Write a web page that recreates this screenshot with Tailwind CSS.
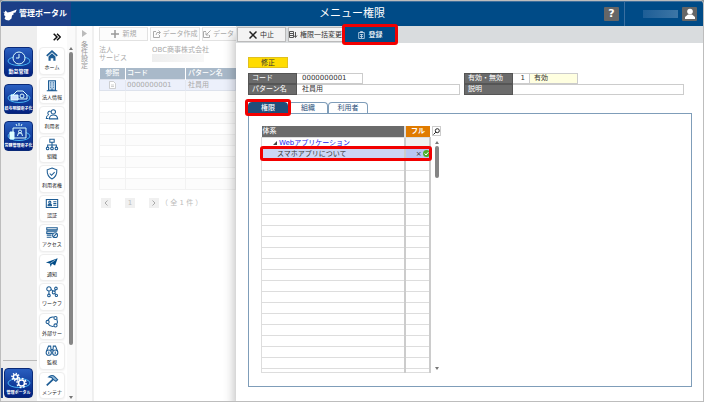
<!DOCTYPE html>
<html lang="ja">
<head>
  <meta charset="UTF-8">
  <meta name="viewport" content="width=device-width, initial-scale=1.0">
  <title>メニュー権限 - 管理ポータル</title>
  <script src="https://cdn.jsdelivr.net/npm/@tailwindcss/browser@4"></script>
</head>
<body class="bg-[#8a9299] font-['DejaVu_Sans','Noto_Sans_CJK_JP',sans-serif] text-[7px] leading-[10px] text-[#333]">
<div class="flex h-screen min-h-[402px] flex-col overflow-hidden rounded-t border border-[#bdbdbd] bg-white">

  <!-- Header -->
  <header class="flex h-[25px] shrink-0 items-center border-t border-[#3f6f9c] bg-[#004b87] text-white">
    <a href="#" class="flex h-full w-[70px] items-center gap-[2px] bg-[#1c3f87] pl-[2px] text-[8px] font-bold">
      <svg class="h-[13px] w-[14px]" viewBox="0 0 14 13" fill="currentColor"><path d="M0 3.500l1.500 1 1-2 2 2L7 4l6.800-2.500-1.300 3-2.500.5 1 1-2 1.500-.5 3L6 12.500l-3-.500-1.500-1.500 1-2L1 7l.5-1.500z"/></svg>
      管理ポータル
    </a>
    <h1 class="flex-1 pl-[29px] text-center text-[11px] leading-4">メニュー権限</h1>
    <button class="mr-[5px] flex h-[14px] w-[15px] items-center justify-center rounded-[1px] bg-[#666] text-[11px] font-bold">?</button>
    <div class="flex h-full w-[79px] items-center justify-end gap-1 border-l border-[#3a6fa0] pr-[6px]">
      <span class="h-2 w-[35px] bg-gradient-to-r from-[#1d5e96] to-[#3d76a6]"></span>
      <button class="flex h-[14px] w-[15px] items-center justify-center rounded-[1px] bg-[#666]" aria-label="ユーザー">
        <svg class="h-3 w-3" viewBox="0 0 12 12" fill="#fff"><circle cx="6" cy="3.500" r="2.800"/><path d="M1 11V9l3-2.500h4L11 9v2z"/></svg>
      </button>
    </div>
  </header>

  <div class="flex min-h-0 flex-1">
    <!-- Service switcher -->
    <nav class="flex w-9 shrink-0 flex-col gap-[7px] bg-[#eee] pt-[21px] pb-[3px] text-[4px] leading-[5px] font-bold text-white">
      <a href="#" class="ml-[3px] flex h-[30px] w-[29px] flex-col items-center justify-end rounded border border-[#0a2a78] bg-gradient-to-b from-[#2a5fc0] to-[#04207f] pb-[2px] whitespace-nowrap">
        <svg class="h-5 w-6" viewBox="0 0 24 20" fill="none" stroke="#dff" stroke-width="1"><ellipse cx="12" cy="12" rx="11" ry="4.500" stroke="#4ab4f4"/><circle cx="12" cy="9" r="6" fill="#1c48a8"/><path d="M12 5v4H9"/></svg>
        <span class="text-[5px]">勤怠管理</span>
      </a>
      <a href="#" class="ml-[3px] flex h-[30px] w-[29px] flex-col items-center justify-end rounded border border-[#0a2a78] bg-gradient-to-b from-[#2a5fc0] to-[#04207f] pb-[2px] whitespace-nowrap">
        <svg class="h-5 w-6" viewBox="0 0 24 20" fill="none" stroke="#dff" stroke-width="1"><ellipse cx="12" cy="12" rx="11" ry="4.500" stroke="#4ab4f4"/><path d="M6 9l4-4h6l4 4v4H6z" fill="#1c48a8"/><path d="M4 9h7v5H4z" fill="#cdf"/><circle cx="15" cy="10" r="2"/></svg>
        給与明細電子化
      </a>
      <a href="#" class="ml-[3px] flex h-[30px] w-[29px] flex-col items-center justify-end rounded border border-[#0a2a78] bg-gradient-to-b from-[#2a5fc0] to-[#04207f] pb-[2px] whitespace-nowrap">
        <svg class="h-5 w-6" viewBox="0 0 24 20" fill="none" stroke="#dff" stroke-width="1"><ellipse cx="12" cy="13" rx="11" ry="4.500" stroke="#4ab4f4"/><path d="M6 5h13v10H6z" fill="#1c48a8"/><path d="M3 9h4v7H3z" fill="#dff"/><circle cx="13" cy="8.500" r="1.500"/><path d="M10.500 13l1-3h3l1 3M9 1l1 2M12 0v3M15 1l-1 2"/></svg>
        労務管理電子化
      </a>
      <div class="mt-auto ml-[2px] border-t border-[#bbb]"></div>
      <a href="#" class="flex h-[30px] border-l-2 border-[#1c3f87] pl-[1px]">
        <span class="flex w-[29px] flex-col items-center justify-end rounded border border-[#0a2a78] bg-gradient-to-b from-[#2a5fc0] to-[#04207f] pb-[2px] whitespace-nowrap">
          <svg class="h-5 w-6" viewBox="0 0 24 20" fill="none" stroke="#fff" stroke-width="1.600"><ellipse cx="12" cy="13" rx="11" ry="4.500" stroke="#4ab4f4" stroke-width="1"/><circle cx="8.500" cy="7" r="2.200"/><circle cx="8.500" cy="7" r="3.500" stroke-dasharray="1.300 1.400"/><circle cx="14.500" cy="13" r="3"/><circle cx="14.500" cy="13" r="4.500" stroke-dasharray="1.700 1.800"/></svg>
          管理ポータル
        </span>
      </a>
    </nav>

    <!-- Menu -->
    <nav class="flex w-[30px] shrink-0 flex-col bg-white pb-[2px] pl-[2px]">
      <button class="flex h-[21px] shrink-0 items-center justify-end pr-[6px]" aria-label="展開">
        <svg class="h-2 w-2" viewBox="0 0 8 8" fill="none" stroke="#111" stroke-width="1.500"><path d="M.7.7L4 4 .7 7.300M4 .7L7.300 4 4 7.300"/></svg>
      </button>
      <ul id="menu" class="flex flex-1 flex-col gap-[2px] pr-[2px] text-[5px] leading-[7px] text-[#222]"></ul>
    </nav>
    <div class="flex w-[8px] shrink-0 flex-col items-center bg-[#fafafa] pt-[21px] pb-[2px]">
      <svg class="h-[3px] w-1" viewBox="0 0 4 3" fill="#777"><path d="M2 0l2 3H0z"/></svg>
      <span class="mt-[2px] min-h-[92px] w-1 basis-[293px] rounded-full bg-[#858585]"></span>
      <svg class="mt-auto h-[3px] w-1" viewBox="0 0 4 3" fill="#777"><path d="M2 3l2-3H0z"/></svg>
    </div>

    <!-- Search conditions, folded -->
    <aside class="flex w-[19px] shrink-0 flex-col items-center border-x-2 border-[#f0f0f0] bg-[#fcfcfc] pt-1 text-[#999]">
      <svg class="h-[7px] w-[5px]" viewBox="0 0 5 7" fill="#bbb"><path d="M0 0l5 3.500L0 7z"/></svg>
      <span class="mt-[5px] w-[7px] leading-[7px] break-all">条件設定</span>
    </aside>

    <!-- Pattern list -->
    <main class="w-1/5 min-w-[142px] shrink-0 overflow-hidden bg-white pl-[5px] whitespace-nowrap text-[#aaa]">
      <div class="flex gap-[2px] pt-[1px]">
        <button class="flex h-[14px] w-[49px] shrink-0 items-center justify-center gap-1 border border-[#e2e2e2] bg-[#fcfcfc]">
          <svg class="h-2 w-2" viewBox="0 0 8 8" stroke="#999" stroke-width="1.500"><path d="M4 0v8M0 4h8"/></svg>新規
        </button>
        <button class="flex h-[14px] w-[50px] shrink-0 items-center justify-center gap-[2px] border border-[#e2e2e2] bg-[#fcfcfc]">
          <svg class="h-2 w-2" viewBox="0 0 8 8" fill="none" stroke="#aaa"><path d="M3 1.500H.5v6h6V5M3 5l1-2.500h3M5.500.5l2 2-2 2"/></svg>データ作成
        </button>
        <button class="flex h-[14px] w-[50px] shrink-0 items-center gap-[2px] border border-[#e2e2e2] bg-[#fcfcfc]">
          <svg class="h-2 w-2" viewBox="0 0 8 8" fill="none" stroke="#aaa"><path d="M3 1.500H.5v6h6V5M7.500.5L3 5M3 2.500V5h2.500"/></svg>データ
        </button>
      </div>
      <dl class="mt-[5px] grid grid-cols-[53px_1fr] leading-[8px]">
        <dt>法人</dt><dd>OBC商事株式会社</dd>
        <dt>サービス</dt><dd><span class="block h-2 w-[52px] bg-gradient-to-r from-[#eee] to-[#f8f8f8]"></span></dd>
      </dl>
      <table class="mt-[6px] w-full table-fixed border-collapse">
        <thead>
          <tr class="h-[11px] bg-[#a9b9c9] text-left text-white">
            <th class="w-[26px] border-r border-white p-0 text-center font-medium">参照</th>
            <th class="w-[60px] border-r border-white p-0 pl-[1px] font-medium">コード</th>
            <th class="p-0 pl-[2px] font-medium">パターン名</th>
          </tr>
        </thead>
        <tbody id="patterns">
          <tr class="h-[11px] border border-[#dde2ec] bg-[#ecf0fb]">
            <td class="p-0"><svg class="mx-auto h-2 w-[7px]" viewBox="0 0 7 8" fill="#fff" stroke="#bbb" stroke-width=".7"><path d="M.5.5h4l2 2v5h-6zM2 4h3M2 5.500h3"/></svg></td>
            <td class="border-x border-[#e3e7f0] p-0 pl-[1px]">0000000001</td>
            <td class="p-0 pl-[2px]">社員用</td>
          </tr>
        </tbody>
      </table>
      <div class="mt-[8px] flex items-center pl-[2px] text-[#bbb]">
        <button class="flex h-[10px] w-[10px] items-center justify-center bg-[#f0f0f0]" aria-label="前へ"><svg class="h-[6px] w-1" viewBox="0 0 4 6" fill="none" stroke="#aaa"><path d="M3.500.5L1 3l2.500 2.500"/></svg></button>
        <button class="ml-[14px] h-[10px] w-[10px] bg-[#f0f0f0]">1</button>
        <button class="ml-[14px] flex h-[10px] w-[10px] items-center justify-center bg-[#f0f0f0]" aria-label="次へ"><svg class="h-[6px] w-1" viewBox="0 0 4 6" fill="none" stroke="#aaa"><path d="M.5.5L3 3 .5 5.500"/></svg></button>
        <span class="ml-[2px]">（ 全 1 件 ）</span>
      </div>
    </main>

    <!-- Edit panel -->
    <section class="relative flex min-w-0 flex-1 flex-col bg-white shadow-[-2px_8px_10px_rgba(0,0,0,0.25)]">
      <div class="flex h-[17px] shrink-0 items-center gap-[2px] bg-[#d9dcde] px-[1px]">
        <button class="flex h-[15px] w-[49px] items-center justify-center gap-[3px] border border-[#bbb] bg-[#f3f3f3]">
          <svg class="h-2 w-2" viewBox="0 0 8 8" stroke="#222" stroke-width="1.500"><path d="M.5.5l7 7M7.500.5l-7 7"/></svg>中止
        </button>
        <button class="flex h-[15px] w-[55px] items-center gap-[2px] border border-[#bbb] bg-[#f3f3f3] whitespace-nowrap">
          <svg class="h-2 w-[9px] shrink-0" viewBox="0 0 9 8" fill="none" stroke="#555"><path d="M.5.5h4v6h-4zM1 2.500h3M1 4.500h3M6.500 1v5M5 4.500L6.500 6.500 8 4.500"/></svg>権限一括変更
        </button>
        <button class="relative flex h-[15px] w-[50px] items-center justify-center gap-1 bg-[#004b87] font-medium text-white">
          <svg class="h-2 w-[7px]" viewBox="0 0 7 8" fill="none" stroke="#cde" stroke-width=".8"><path d="M.7 1.500h5.600v6H.7zM2.500.5h2v1h-2zM2 3.500h3M2 5.500h3M3.500 3v4"/></svg>登録
          <span class="absolute -inset-[3px] z-10 rounded-[3px] border-3 border-[#f20000]"></span>
        </button>
      </div>

      <div class="flex flex-1 flex-col pt-[14px] pr-[11px] pb-[14px] pl-[12px]">
        <div class="h-[11px] w-10 border border-[#e0c020] bg-[#ffdc00] text-center leading-[10px]">修正</div>

        <form class="mt-[5px] mr-2 grid grid-cols-[211fr_219fr] gap-x-1">
          <div class="flex h-[11px]">
            <label for="code" class="w-[49px] border border-[#555] bg-[#6b6b6b] pl-[3px] leading-[9px] text-white">コード</label>
            <input id="code" value="0000000001" class="w-[66px] border border-l-0 border-[#ccc] px-[5px] leading-[9px]">
          </div>
          <div class="flex h-[11px]">
            <label for="state" class="w-[49px] border border-[#555] bg-[#6b6b6b] pl-[3px] leading-[9px] text-white">有効・無効</label>
            <input id="state" value="1" class="w-[17px] border border-l-0 border-[#ccc] pr-1 text-right leading-[9px]">
            <output for="state" class="w-12 border border-l-0 border-[#ccc] bg-[#ffffe0] pl-1 leading-[9px]">有効</output>
          </div>
          <div class="flex h-[11px]">
            <label for="name" class="w-[49px] shrink-0 border border-[#555] bg-[#6b6b6b] pl-[3px] leading-[9px] text-white">パターン名</label>
            <input id="name" value="社員用" class="min-w-0 flex-1 border border-l-0 border-[#ccc] px-[5px] leading-[9px]">
          </div>
          <div class="flex h-[11px]">
            <label for="note" class="w-[49px] shrink-0 border border-[#555] bg-[#6b6b6b] pl-[3px] leading-[9px] text-white">説明</label>
            <input id="note" class="min-w-0 flex-1 border border-l-0 border-[#ccc] px-[5px] leading-[9px]">
          </div>
        </form>

        <div class="mt-[7px] flex h-[11px] text-[#1f4e79]" role="tablist">
          <button role="tab" aria-selected="true" class="relative w-10 rounded-t-sm bg-[#1f4e79] font-medium text-white">権限<span class="absolute -inset-[3px] z-10 rounded-[3px] border-3 border-[#f20000]"></span></button>
          <button role="tab" class="w-10 rounded-t-sm border border-b-0 border-[#7f9db9]">組織</button>
          <button role="tab" class="w-10 rounded-t-sm border border-b-0 border-[#7f9db9]">利用者</button>
        </div>

        <div class="flex flex-1 border border-[#7f9db9] pt-3 pb-3 pl-3">
          <table class="w-[170px] table-fixed border-collapse self-start">
            <thead>
              <tr class="h-[11px] text-left text-white">
                <th class="border-r-2 border-[#ddd] bg-[#6b6b6b] p-0 pl-[1px] font-medium">体系</th>
                <th class="w-[25px] bg-[#e07b00] p-0 text-center font-bold">フル</th>
              </tr>
            </thead>
            <tbody id="rights">
              <tr class="h-[11px] border border-[#ddd]">
                <td class="border-r-2 border-[#ccc] p-0 pl-[11px]">
                  <a href="#" class="flex items-center gap-[2px] text-[#2222ee] underline"><svg class="h-1 w-1" viewBox="0 0 4 4" fill="#444"><path d="M4 0v4H0z"/></svg>Webアプリケーション</a>
                </td>
                <td class="border-r-2 border-[#ccc] bg-[#f0f0f0] p-0"></td>
              </tr>
              <tr class="relative h-[11px] border border-[#ddd] bg-[#ccd6f5]">
                <td class="border-r-2 border-[#ccc] p-0 pl-[15px]">スマホアプリについて<span class="absolute -inset-[3px] z-10 rounded-[3px] border-3 border-[#f20000]"></span></td>
                <td class="border border-[#334] bg-[#b9c6f2] p-0">
                  <span class="flex items-center justify-end gap-[1px]">×<svg class="h-[7px] w-[7px]" viewBox="0 0 7 7"><circle cx="3.500" cy="3.500" r="3.500" fill="#4caf2a"/><path d="M1.700 3.500L3 5l2.400-2.800" fill="none" stroke="#fff"/></svg></span>
                </td>
              </tr>
            </tbody>
          </table>
          <div class="flex w-[11px] flex-col items-center">
            <button class="flex h-[10px] w-[9px] items-center justify-center border border-[#ccc]" aria-label="検索"><svg class="h-[7px] w-[7px]" viewBox="0 0 7 7" fill="none" stroke="#222"><circle cx="4.300" cy="2.700" r="2"/><path d="M2.800 4.200L.5 6.500"/></svg></button>
            <svg class="mt-[5px] h-[3px] w-1 shrink-0" viewBox="0 0 4 3" fill="#777"><path d="M2 0l2 3H0z"/></svg>
            <span class="mt-[2px] h-8 w-1 rounded-full bg-[#858585]"></span>
            <svg class="mt-auto mb-1 h-[3px] w-1 shrink-0" viewBox="0 0 4 3" fill="#777"><path d="M2 3l2-3H0z"/></svg>
          </div>
        </div>
      </div>
    </section>
  </div>
</div>

<script>
  // label and 16x14 icon of each menu entry
  const menu = [
    ['ホーム', '<path d="M2 7.500L8 2l6 5.500" stroke-width="2"/><path d="M4 8l4-3.500L12 8v5H9.500v-3h-3v3H4z" fill="#1d5c94" stroke="none"/>'],
    ['法人情報', '<path d="M4 1.500h8v11H4z" fill="#bcd4ea"/><path d="M2 13h12M6 4h1M9 4h1M6 6.500h1M9 6.500h1M6 9h1M9 9h1M8 10.500V13"/>'],
    ['利用者', '<circle cx="9.500" cy="4" r="2.500"/><path d="M5 12c0-6 9-6 9.500 0zM4.500 7.500a2 2 0 1 1 2-4M3.500 8C2 8.500 1.500 10 1.500 11.500H4"/>'],
    ['組織', '<path d="M5.500 1h5v3.500h-5zM8 4.500V10M3 10V7.500h10V10"/><circle cx="3" cy="11.500" r="1.500"/><circle cx="8" cy="11.500" r="1.500"/><circle cx="13" cy="11.500" r="1.500"/>'],
    ['利用者権', '<path d="M8 .8l5.500 2c.3 5-1.500 8.500-5.500 10.500C4 11.300 2.200 7.800 2.500 2.800zM5.500 7l2 2 3.500-3.500"/>'],
    ['認証', '<path d="M1.500 2.500h13v9h-13zM9.500 5H13M9.500 7H13M9.500 9H13"/><circle cx="5.500" cy="5.500" r="1.200"/><path d="M3.500 9.500c0-3 4-3 4 0z" fill="#1d5c94"/>'],
    ['アクセス', '<path d="M2 1.500h12v2.500H2zM2 5.500h12M2 5.500V8h7M2 10h5.500M2 12.500h5.500"/><circle cx="11.500" cy="10" r="2.800"/><path d="M9.500 12l4-4"/>'],
    ['通知', '<path d="M1 7L14.500 2l-3 8.500L8 8.500 6.500 12 5.500 8z" fill="#004b87" stroke="none"/><path d="M6 8l6-4" stroke="#fff" stroke-width=".6"/>'],
    ['ワークフ', '<circle cx="4.500" cy="4" r="2.500"/><circle cx="12.500" cy="3.500" r="1.500"/><circle cx="10" cy="8" r="1.700"/><circle cx="4.500" cy="11.500" r="1.500"/><circle cx="13" cy="11.500" r="1.300"/><path d="M4.500 6.500V10M7 4.500l2 2M11 7l1-2M11 9l1 1.500"/>'],
    ['外部サー', '<circle cx="3" cy="7.500" r="1.800"/><circle cx="12" cy="3" r="1.800"/><circle cx="12" cy="11.500" r="1.800"/><path d="M3.500 5.500C5 2.500 7 1.500 10 2M13.500 4.500c1 2 1 3.500 0 5.500M3.500 9.500c1.500 2.500 3.500 3.500 6.500 3"/>'],
    ['監視', '<circle cx="4.300" cy="9.500" r="3"/><circle cx="11.700" cy="9.500" r="3"/><path d="M1.500 8.500L4 2h2.500l.5 6M14.500 8.500L12 2H9.500L9 8M7 6h2M4.300 8v3M11.700 8v3"/>'],
    ['メンテナ', '<path d="M4 3C6.500.5 9.500.8 11 2.500l3.500 3.500-2 2-2-1.500L9 5.500 7.500 3.500z" fill="#8db4d6"/><path d="M9.500 5.500l-7.500 7" stroke-width="2"/>']
  ];
  document.getElementById('menu').innerHTML = menu.map(([label, icon]) => `
    <li class="flex min-h-0 flex-1">
      <a href="#" class="flex w-full flex-col items-center rounded-sm border border-[#eee] bg-white pt-[1px] shadow-xs whitespace-nowrap">
        <svg class="h-[13px] w-[14px]" viewBox="0 0 16 14" fill="none" stroke="#1d5c94" stroke-width="1.200">${icon}</svg>
        <span class="mt-[2px]">${label}</span>
      </a>
    </li>`).join('');

  // empty grid rows
  for (let i = 0; i < 9; i++) {
    document.getElementById('patterns').insertAdjacentHTML('beforeend',
      '<tr class="h-[11px] border border-[#f2f2f2] odd:bg-white even:bg-[#fcfcfc]"><td class="p-0"></td><td class="border-x border-[#f2f2f2] p-0"></td><td class="p-0"></td></tr>');
  }
  for (let i = 0; i < 19; i++) {
    document.getElementById('rights').insertAdjacentHTML('beforeend',
      '<tr class="h-[11px] border border-[#ddd]"><td class="border-r-2 border-[#ccc] p-0"></td><td class="border-r-2 border-[#ccc] p-0"></td></tr>');
  }
  document.getElementById('rights').insertAdjacentHTML('beforeend',
    '<tr class="h-1 border border-[#ddd]"><td class="border-r-2 border-[#ccc] p-0"></td><td class="border-r-2 border-[#ccc] p-0"></td></tr>');
</script>
</body>
</html>
